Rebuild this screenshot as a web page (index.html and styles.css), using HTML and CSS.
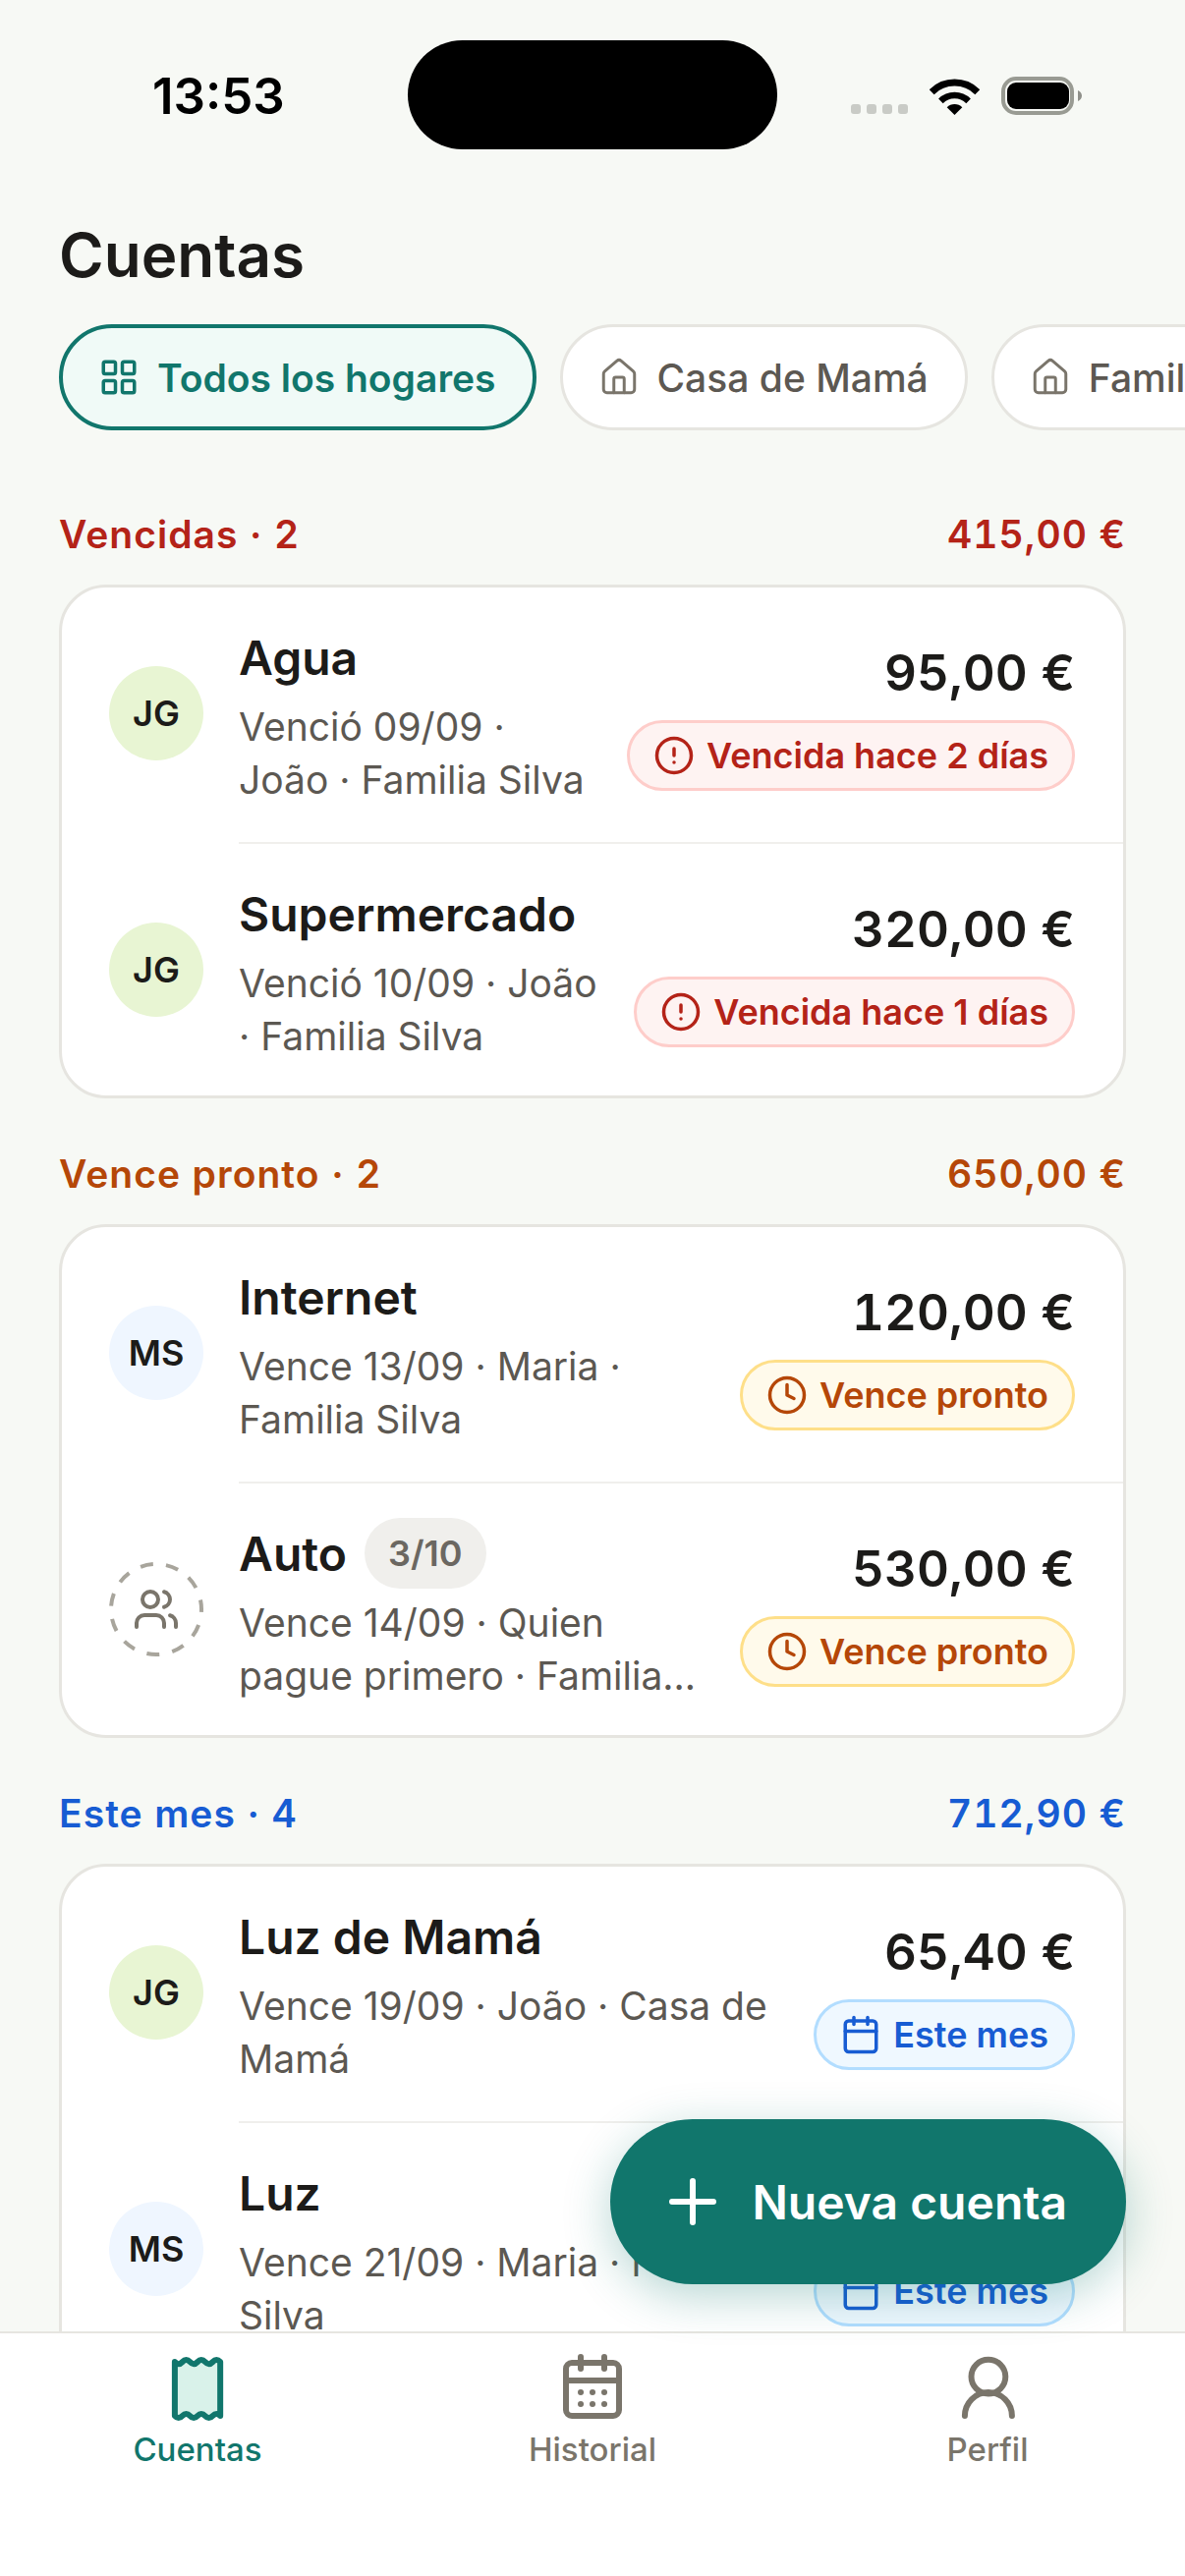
FILE: index.html
```html
<!DOCTYPE html>
<html lang="es">
<head>
  <meta charset="UTF-8" />
  <meta name="viewport" content="width=device-width, initial-scale=1" />
  <title>Cuentas</title>
  <link rel="stylesheet" href="styles.css">
</head>
<body>
  <svg class="sprite" aria-hidden="true">
    <symbol id="i-grid" viewBox="0 0 24 24"><rect x="3" y="3" width="7" height="7" rx="1"/><rect x="14" y="3" width="7" height="7" rx="1"/><rect x="14" y="14" width="7" height="7" rx="1"/><rect x="3" y="14" width="7" height="7" rx="1"/></symbol>
    <symbol id="i-home" viewBox="0 0 24 24"><path d="M15 21v-8a1 1 0 0 0-1-1h-4a1 1 0 0 0-1 1v8"/><path d="M3 10a2 2 0 0 1 .709-1.528l7-6a2 2 0 0 1 2.582 0l7 6A2 2 0 0 1 21 10v9a2 2 0 0 1-2 2H5a2 2 0 0 1-2-2z"/></symbol>
    <symbol id="i-alert" viewBox="0 0 24 24"><circle cx="12" cy="12" r="10"/><path d="M12 8v4"/><path d="M12 16h.01"/></symbol>
    <symbol id="i-clock" viewBox="0 0 24 24"><circle cx="12" cy="12" r="10"/><path d="M12 6v6l4 2"/></symbol>
    <symbol id="i-cal" viewBox="0 0 24 24"><path d="M8 2v4"/><path d="M16 2v4"/><rect x="3" y="4" width="18" height="18" rx="2"/><path d="M3 10h18"/></symbol>
  </svg>

  <div class="screen">
    <header class="status">
      <span class="time">13:53</span>
      <div class="island"></div>
      <div class="status-icons">
        <div class="signal"><i></i><i></i><i></i><i></i></div>
        <svg class="wifi" width="51" height="37" viewBox="0 0 51 37">
          <path d="M2.2 13.7a33 33 0 0 1 46.6 0" fill="none" stroke="#000" stroke-width="7"/>
          <path d="M11.4 22.9a20 20 0 0 1 28.2 0" fill="none" stroke="#000" stroke-width="6.5"/>
          <path d="M25.5 37l-7.8-7.8a11 11 0 0 1 15.6 0z" fill="#000"/>
        </svg>
        <svg class="battery" width="82" height="39" viewBox="0 0 82 39">
          <rect x="2" y="2" width="70" height="35" rx="13" fill="none" stroke="#999b93" stroke-width="4"/>
          <rect x="6" y="6" width="63" height="27" rx="9" fill="#000"/>
          <path d="M78 14c2.500 1 4 3 4 5.500s-1.500 4.500-4 5.500z" fill="#8f908a"/>
        </svg>
      </div>
    </header>

    <main class="content">
      <h1 class="page-title">Cuentas</h1>

      <div class="chips">
        <div class="chip chip-active"><svg class="ico"><use href="#i-grid"/></svg>Todos los hogares</div>
        <div class="chip"><svg class="ico ico-thin"><use href="#i-home"/></svg>Casa de Mamá</div>
        <div class="chip"><svg class="ico ico-thin"><use href="#i-home"/></svg>Familia Silva</div>
      </div>

      <section class="group group-red">
        <div class="group-head"><span>Vencidas · 2</span><span>415,00 €</span></div>
        <div class="card">
          <div class="row">
            <div class="avatar avatar-green">JG</div>
            <div class="row-body">
              <div class="row-main">
                <div class="row-title">Agua</div>
                <div class="row-sub">Venció 09/09 ·<br>João · Familia Silva</div>
              </div>
              <div class="row-side">
                <div class="amount">95,00 €</div>
                <div class="badge badge-red"><svg class="ico"><use href="#i-alert"/></svg>Vencida hace 2 días</div>
              </div>
            </div>
          </div>
          <div class="row">
            <div class="avatar avatar-green">JG</div>
            <div class="row-body">
              <div class="row-main">
                <div class="row-title">Supermercado</div>
                <div class="row-sub">Venció 10/09 · João<br>· Familia Silva</div>
              </div>
              <div class="row-side">
                <div class="amount">320,00 €</div>
                <div class="badge badge-red"><svg class="ico"><use href="#i-alert"/></svg>Vencida hace 1 días</div>
              </div>
            </div>
          </div>
        </div>
      </section>

      <section class="group group-orange">
        <div class="group-head"><span>Vence pronto · 2</span><span>650,00 €</span></div>
        <div class="card">
          <div class="row">
            <div class="avatar avatar-blue">MS</div>
            <div class="row-body">
              <div class="row-main">
                <div class="row-title">Internet</div>
                <div class="row-sub">Vence 13/09 · Maria ·<br>Familia Silva</div>
              </div>
              <div class="row-side">
                <div class="amount">120,00 €</div>
                <div class="badge badge-orange"><svg class="ico"><use href="#i-clock"/></svg>Vence pronto</div>
              </div>
            </div>
          </div>
          <div class="row">
            <div class="avatar">
              <svg class="open-slot" viewBox="0 0 96 96">
                <circle class="open-ring" cx="48" cy="48" r="46"/>
                <g class="open-users" transform="translate(24 24) scale(2)">
                  <path d="M16 21v-2a4 4 0 0 0-4-4H6a4 4 0 0 0-4 4v2"/><path d="M16 3.128a4 4 0 0 1 0 7.744"/><path d="M22 21v-2a4 4 0 0 0-3-3.870"/><circle cx="9" cy="7" r="4"/>
                </g>
              </svg>
            </div>
            <div class="row-body">
              <div class="row-main">
                <div class="row-title">Auto <span class="count">3/10</span></div>
                <div class="row-sub">Vence 14/09 · Quien<br>pague primero · Familia...</div>
              </div>
              <div class="row-side">
                <div class="amount">530,00 €</div>
                <div class="badge badge-orange"><svg class="ico"><use href="#i-clock"/></svg>Vence pronto</div>
              </div>
            </div>
          </div>
        </div>
      </section>

      <section class="group group-blue">
        <div class="group-head"><span>Este mes · 4</span><span>712,90 €</span></div>
        <div class="card">
          <div class="row">
            <div class="avatar avatar-green">JG</div>
            <div class="row-body">
              <div class="row-main">
                <div class="row-title">Luz de Mamá</div>
                <div class="row-sub">Vence 19/09 · João · Casa de<br>Mamá</div>
              </div>
              <div class="row-side">
                <div class="amount">65,40 €</div>
                <div class="badge badge-blue"><svg class="ico"><use href="#i-cal"/></svg>Este mes</div>
              </div>
            </div>
          </div>
          <div class="row">
            <div class="avatar avatar-blue">MS</div>
            <div class="row-body">
              <div class="row-main">
                <div class="row-title">Luz</div>
                <div class="row-sub">Vence 21/09 · Maria · Familia<br>Silva</div>
              </div>
              <div class="row-side">
                <div class="amount">80,00 €</div>
                <div class="badge badge-blue"><svg class="ico"><use href="#i-cal"/></svg>Este mes</div>
              </div>
            </div>
          </div>
        </div>
      </section>
    </main>

    <button class="fab">
      <svg class="fab-plus" viewBox="0 0 24 24"><path d="M5 12h14"/><path d="M12 5v14"/></svg>
      Nueva cuenta
    </button>

    <nav class="tabbar">
      <div class="tab tab-active">
        <svg class="tab-ico" viewBox="0 0 24 24"><path class="receipt" d="M4.300 3.700q1.280 1.400 2.570 0t2.570 0 2.570 0 2.570 0 2.570 0 2.570 0V22q-1.280 -1.400 -2.570 0t-2.570 0 -2.570 0 -2.570 0 -2.570 0 -2.570 0z"/></svg>
        <span>Cuentas</span>
      </div>
      <div class="tab">
        <svg class="tab-ico" viewBox="0 0 24 24"><path d="M8 2v4"/><path d="M16 2v4"/><rect x="3" y="4" width="18" height="18" rx="2"/><path d="M3 10h18"/><path d="M8 14h.01M12 14h.01M16 14h.01M8 18h.01M12 18h.01M16 18h.01"/></svg>
        <span>Historial</span>
      </div>
      <div class="tab">
        <svg class="tab-ico" viewBox="0 0 24 24"><circle cx="12.300" cy="8.700" r="5.800"/><path d="M4.300 22a8 8 0 0 1 16 0"/></svg>
        <span>Perfil</span>
      </div>
    </nav>
  </div>
</body>
</html>
```

FILE: styles.css
```css
:root {
  --bg: #f7f9f5;
  --teal: #11766c;
  --ink: #1c1b19;
  --muted: #5c5852;
  --tab-gray: #7a756b;
  --line: #e6e5e0;
  --line-soft: #f0efec;
  --red: #b42318;
  --orange: #b54708;
  --blue: #175cd3;
}
* {
  box-sizing: border-box;
}
body {
  margin: 0;
  background: var(--bg);
  font-family: Inter, 'Noto Sans', sans-serif;
  color: var(--ink);
}
.sprite {
  display: none;
}
.screen {
  position: relative;
  width: 1206px;
  height: 2622px;
  display: flex;
  flex-direction: column;
  overflow: hidden;
}

/* status bar */
.status {
  flex: none;
  display: flex;
  align-items: flex-start;
  padding: 41px 0 0 155px;
  height: 152px;
}
.time {
  width: 260px;
  font-size: 51px;
  font-weight: 600;
  line-height: 114px;
  color: #000;
}
.island {
  width: 376px;
  height: 111px;
  border-radius: 56px;
  background: #000;
}
.status-icons {
  display: flex;
  align-items: flex-end;
  margin-left: 75px;
  padding-top: 37px;
}
.signal {
  display: flex;
  gap: 6px;
  margin-bottom: 1px;
}
.signal i {
  width: 10px;
  height: 10px;
  border-radius: 3px;
  background: #c9cbc6;
}
.wifi {
  margin-left: 22px;
}
.battery {
  margin-left: 22px;
}

/* page content */
.content {
  flex: 1;
  min-height: 0;
  overflow: hidden;
  padding: 0 60px;
}
.page-title {
  margin: 72px 0 34px;
  font-size: 62px;
  font-weight: 600;
  line-height: 72px;
  color: var(--ink);
}
.chips {
  display: flex;
  gap: 24px;
  margin-right: -60px;
}
.chip {
  flex: none;
  display: flex;
  align-items: center;
  gap: 18px;
  height: 108px;
  padding: 0 37px 0 36px;
  border: 3px solid var(--line);
  border-radius: 54px;
  background: #fff;
  font-size: 39px;
  font-weight: 500;
  color: var(--muted);
}
.chip-active {
  border: 4.5px solid var(--teal);
  background: #f0faf7;
  color: var(--teal);
  font-weight: 600;
}
.ico {
  flex: none;
  width: 42px;
  height: 42px;
  fill: none;
  stroke: currentColor;
  stroke-width: 2;
  stroke-linecap: round;
  stroke-linejoin: round;
}
.ico-thin {
  stroke-width: 1.7;
  color: var(--tab-gray);
}

/* groups */
.group {
  margin-top: 53px;
}
.chips + .group {
  margin-top: 82px;
}
.group-head {
  display: flex;
  justify-content: space-between;
  margin-bottom: 27px;
  font-size: 39px;
  font-weight: 600;
  line-height: 48px;
  letter-spacing: 1.05px;
  font-variant-numeric: tabular-nums;
}
.group-red .group-head {
  color: var(--red);
}
.group-orange .group-head {
  color: var(--orange);
}
.group-blue .group-head {
  color: var(--blue);
}
.card {
  background: #fff;
  border: 3px solid var(--line);
  border-radius: 48px;
  overflow: hidden;
}
.row {
  display: flex;
  padding-left: 48px;
}
.avatar {
  flex: none;
  width: 96px;
  height: 96px;
  margin: 80px 36px 0 0;
  border-radius: 50%;
  display: flex;
  align-items: center;
  justify-content: center;
  font-size: 36px;
  font-weight: 600;
  color: var(--ink);
}
.avatar-green {
  background: #e8f5d3;
}
.avatar-blue {
  background: #eff6ff;
}
.open-slot {
  width: 96px;
  height: 96px;
  fill: none;
}
.open-ring {
  stroke: #a8a59c;
  stroke-width: 4;
  stroke-dasharray: 13 13.27;
  stroke-dashoffset: -16.3;
}
.open-users {
  stroke: var(--tab-gray);
  stroke-width: 2;
  stroke-linecap: round;
  stroke-linejoin: round;
}
.row-body {
  flex: 1;
  min-width: 0;
  display: flex;
  align-items: center;
  justify-content: space-between;
  padding: 41px 49px 36px 0;
  border-bottom: 2px solid var(--line-soft);
}
.row:last-child .row-body {
  padding-bottom: 33px;
  border-bottom: none;
}
.row-title {
  display: flex;
  align-items: center;
  gap: 18px;
  height: 60px;
  font-size: 48px;
  font-weight: 600;
  color: var(--ink);
}
.count {
  display: flex;
  align-items: center;
  height: 72px;
  padding: 0 24px;
  border-radius: 36px;
  background: var(--line-soft);
  font-size: 36px;
  font-weight: 600;
  color: #6b6761;
}
.row-sub {
  margin-top: 14px;
  font-size: 39px;
  line-height: 54px;
  color: var(--muted);
  white-space: nowrap;
}
.row-side {
  flex: none;
  display: flex;
  flex-direction: column;
  align-items: flex-end;
  gap: 18px;
}
.amount {
  font-size: 51px;
  font-weight: 600;
  line-height: 60px;
  color: var(--ink);
  font-variant-numeric: tabular-nums;
}
.badge {
  display: flex;
  align-items: center;
  gap: 12px;
  height: 72px;
  padding: 0 24px;
  border: 3px solid;
  border-radius: 36px;
  font-size: 36px;
  font-weight: 600;
}
.badge-red {
  background: #fef3f2;
  border-color: #fecdca;
  color: var(--red);
}
.badge-orange {
  background: #fffaeb;
  border-color: #fedf89;
  color: var(--orange);
}
.badge-blue {
  background: #eff8ff;
  border-color: #b2ddff;
  color: var(--blue);
}

/* floating button */
.fab {
  position: absolute;
  right: 60px;
  bottom: 297px;
  display: flex;
  align-items: center;
  gap: 24px;
  height: 168px;
  padding: 0 60px 0 48px;
  border: none;
  border-radius: 84px;
  background: var(--teal);
  box-shadow: 0 12px 48px rgba(17, 118, 108, 0.3);
  font-family: inherit;
  font-size: 48px;
  font-weight: 600;
  color: #fff;
}
.fab-plus {
  width: 72px;
  height: 72px;
  fill: none;
  stroke: #fff;
  stroke-width: 2;
  stroke-linecap: round;
}

/* tab bar */
.tabbar {
  flex: none;
  display: flex;
  height: 249px;
  padding-top: 18px;
  background: #fff;
  border-top: 2px solid var(--line);
}
.tab {
  flex: 1;
  display: flex;
  flex-direction: column;
  align-items: center;
  font-size: 33px;
  font-weight: 500;
  line-height: 44px;
  color: var(--tab-gray);
}
.tab span {
  margin-top: 6px;
}
.tab-active {
  color: var(--teal);
}
.tab-ico {
  width: 72px;
  height: 72px;
  fill: none;
  stroke: currentColor;
  stroke-width: 2;
  stroke-linecap: round;
  stroke-linejoin: round;
}
.receipt {
  fill: #d9f2ea;
}
```
